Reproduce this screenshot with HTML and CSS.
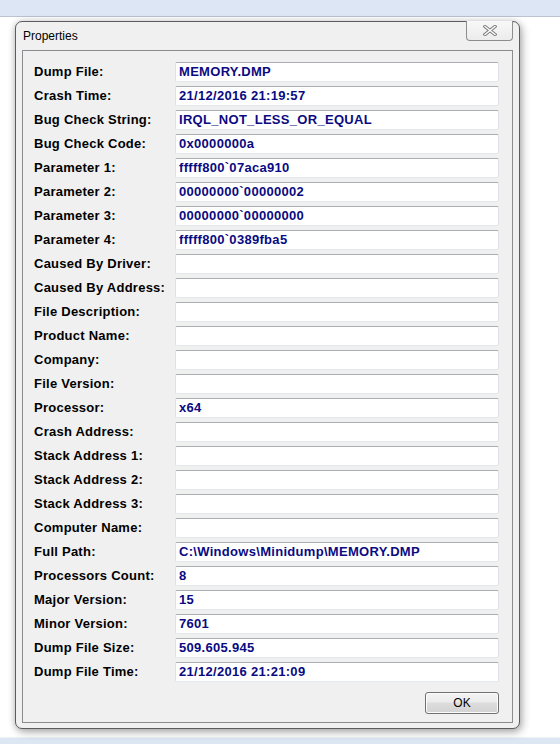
FILE: index.html
```html
<!DOCTYPE html>
<html lang="en">
<head>
<meta charset="utf-8">
<title>Properties</title>
<link rel="stylesheet" href="styles.css">
</head>
<body>
<div class="desktop">
  <div class="top-band"></div>
  <div class="workspace"></div>
  <div class="bottom-band"></div>

  <div class="dialog">
    <div class="titlebar">
      <span class="title">Properties</span>
      <button class="close" type="button" aria-label="Close">
        <svg width="14" height="11" viewBox="0 0 14 11">
          <path d="M2 1.5 L12 9.5 M12 1.5 L2 9.5" stroke="#7d7d7d" stroke-width="3.4" stroke-linecap="square" fill="none"/>
          <path d="M2 1.5 L12 9.5 M12 1.5 L2 9.5" stroke="#ffffff" stroke-width="1.4" stroke-linecap="square" fill="none"/>
        </svg>
      </button>
    </div>

    <div class="panel">
      <div class="fields">
        <span class="label">Dump File:</span><div class="box">MEMORY.DMP</div>
        <span class="label">Crash Time:</span><div class="box">21/12/2016 21:19:57</div>
        <span class="label">Bug Check String:</span><div class="box">IRQL_NOT_LESS_OR_EQUAL</div>
        <span class="label">Bug Check Code:</span><div class="box">0x0000000a</div>
        <span class="label">Parameter 1:</span><div class="box">fffff800`07aca910</div>
        <span class="label">Parameter 2:</span><div class="box">00000000`00000002</div>
        <span class="label">Parameter 3:</span><div class="box">00000000`00000000</div>
        <span class="label">Parameter 4:</span><div class="box">fffff800`0389fba5</div>
        <span class="label">Caused By Driver:</span><div class="box"></div>
        <span class="label">Caused By Address:</span><div class="box"></div>
        <span class="label">File Description:</span><div class="box"></div>
        <span class="label">Product Name:</span><div class="box"></div>
        <span class="label">Company:</span><div class="box"></div>
        <span class="label">File Version:</span><div class="box"></div>
        <span class="label">Processor:</span><div class="box">x64</div>
        <span class="label">Crash Address:</span><div class="box"></div>
        <span class="label">Stack Address 1:</span><div class="box"></div>
        <span class="label">Stack Address 2:</span><div class="box"></div>
        <span class="label">Stack Address 3:</span><div class="box"></div>
        <span class="label">Computer Name:</span><div class="box"></div>
        <span class="label">Full Path:</span><div class="box">C:\Windows\Minidump\MEMORY.DMP</div>
        <span class="label">Processors Count:</span><div class="box">8</div>
        <span class="label">Major Version:</span><div class="box">15</div>
        <span class="label">Minor Version:</span><div class="box">7601</div>
        <span class="label">Dump File Size:</span><div class="box">509.605.945</div>
        <span class="label">Dump File Time:</span><div class="box">21/12/2016 21:21:09</div>
      </div>
      <div class="footer">
        <button class="ok" type="button">OK</button>
      </div>
    </div>
  </div>
</div>
</body>
</html>
```

FILE: styles.css
```css
html, body {
  margin: 0;
  padding: 0;
}

body {
  background: #ffffff;
  font-family: "Liberation Sans", Arial, sans-serif;
}

.desktop {
  position: relative;
  width: 560px;
  height: 744px;
  display: flex;
  flex-direction: column;
  overflow: hidden;
}

/* host window strips above and below */
.top-band {
  height: 16px;
  background: #dce6f4;
  border-bottom: 1px solid #b9c3d1;
}

.workspace {
  flex: 1;
  background: #ffffff;
}

.bottom-band {
  height: 6px;
  background: #dde7f4;
  border-top: 1px solid #edf2f9;
}

/* the dialog window */
.dialog {
  position: absolute;
  left: 15px;
  top: 21px;
  box-sizing: border-box;
  width: 505px;
  height: 708px;
  border: 1px solid #5c5c5c;
  border-radius: 7px;
  background: #f0f0f0;
  box-shadow: 2px 3px 9px rgba(0, 0, 0, 0.32), -1px 0 6px rgba(0, 0, 0, 0.12);
  padding: 0 6px 5px 6px;
  display: flex;
  flex-direction: column;
}

.titlebar {
  height: 28px;
  display: flex;
  align-items: center;
  padding-left: 1px;
}

.title {
  font-size: 12px;
  color: #000;
}

.close {
  position: absolute;
  top: -1px;
  right: 6px;
  width: 47px;
  height: 20px;
  margin: 0;
  padding: 0;
  border: 1px solid #8d8d8d;
  border-top: none;
  border-radius: 0 0 4px 4px;
  background: linear-gradient(#f8f8f8, #ececec);
  display: flex;
  align-items: center;
  justify-content: center;
}

.panel {
  flex: 1;
  border: 1px solid #8a8c90;
  padding: 11px 13px 0 11px;
  display: flex;
  flex-direction: column;
}

.fields {
  display: grid;
  grid-template-columns: 141px 324px;
  grid-auto-rows: 20px;
  row-gap: 4px;
}

.label {
  font-size: 13px;
  font-weight: bold;
  letter-spacing: 0.25px;
  color: #000;
  line-height: 20px;
  white-space: nowrap;
}

.box {
  box-sizing: border-box;
  height: 20px;
  background: #ffffff;
  border: 1px solid;
  border-color: #abadb3 #dfe1e6 #e3e9ef #dfe1e6;
  border-radius: 2px;
  padding-left: 3px;
  font-size: 13px;
  font-weight: bold;
  letter-spacing: 0.3px;
  color: #0a0a82;
  line-height: 18px;
  white-space: nowrap;
  overflow: hidden;
}

.footer {
  display: flex;
  justify-content: flex-end;
  margin-top: 10px;
}

.ok {
  width: 74px;
  height: 22px;
  margin: 0;
  padding: 0;
  border: 1px solid #707070;
  border-radius: 3px;
  background: linear-gradient(#f3f3f3 0%, #ececec 45%, #dddddd 50%, #d2d2d2 100%);
  box-shadow: inset 0 0 0 1px #fcfcfc;
  font-family: "Liberation Sans", Arial, sans-serif;
  font-size: 12px;
  color: #000;
}
```
